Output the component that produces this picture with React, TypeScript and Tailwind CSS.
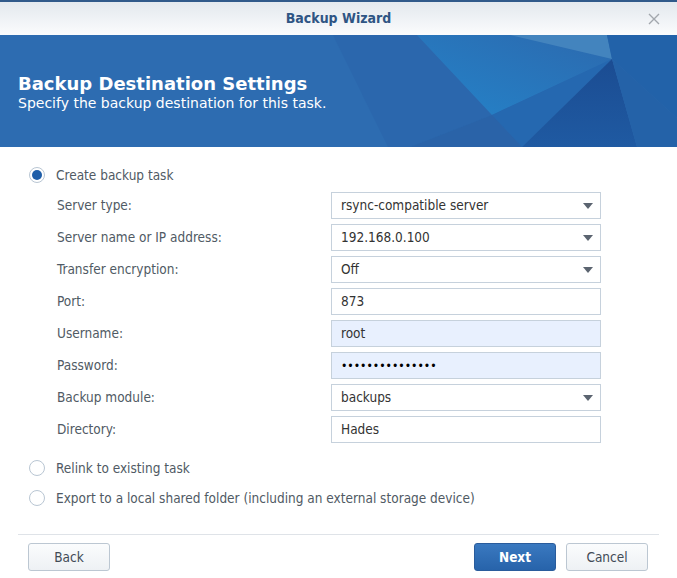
import { ReactNode } from 'react';

const FONT = '"DejaVu Sans Condensed", "DejaVu Sans", "Noto Sans", sans-serif';
const WIDE = '"DejaVu Sans", "Noto Sans", sans-serif';

const Radio = ({ checked }: { checked?: boolean }) => (
    <span className="w-[16px] h-[16px] rounded-full border border-[#b9c6d3] bg-white flex items-center justify-center shrink-0">
        {checked && <span className="w-[10px] h-[10px] rounded-full bg-[#1f5ea8]" />}
    </span>
);

const Caret = () => (
    <svg width="10" height="6" viewBox="0 0 10 6" className="shrink-0">
        <polygon points="0,0 10,0 5,6" fill="#5b6470" />
    </svg>
);

const Field = ({ label, children, select, filled }: { label: string; children: ReactNode; select?: boolean; filled?: boolean }) => (
    <div className="flex items-center h-[27px]">
        <div className="w-[274px] text-[13.5px] text-[#505a64]">{label}</div>
        <div
            className={`w-[270px] h-[27px] border border-[#c6d1dc] flex items-center pl-[9px] pr-[7px] text-[13.5px] text-[#333] ${filled ? 'bg-[#e8f0fe]' : 'bg-white'}`}
        >
            <span className="flex-1">{children}</span>
            {select && <Caret />}
        </div>
    </div>
);

const Banner = () => (
    <div className="relative h-[112px] bg-[#2d6cb1] overflow-hidden">
        {/* fondo poligonal */}
        <svg className="absolute inset-0" width="677" height="112" viewBox="0 0 677 112">
            <defs>
                <linearGradient id="mid" x1="1" y1="0" x2="0" y2="1">
                    <stop offset="0" stopColor="#2c69ae" />
                    <stop offset="1" stopColor="#2483c9" />
                </linearGradient>
                <linearGradient id="dark" x1="0" y1="0" x2="0" y2="1">
                    <stop offset="0" stopColor="#1b4c92" />
                    <stop offset="1" stopColor="#1f5aa2" />
                </linearGradient>
            </defs>
            <polygon points="333,0 417,0 492,80 410,112 388,112" fill="#2b67ad" />
            <polygon points="417,0 510,0 612,24 492,80" fill="url(#mid)" />
            <polygon points="510,0 607,0 612,24" fill="#4384be" />
            <polygon points="607,0 677,0 677,83 612,24" fill="#2262a9" />
            <polygon points="492,80 612,24 522,112" fill="#2568b0" />
            <polygon points="410,112 492,80 522,112" fill="#2a63a8" />
            <polygon points="612,24 522,112 637,112" fill="url(#dark)" />
            <polygon points="612,24 637,112 677,112 677,83" fill="#2462a8" />
        </svg>
        <div className="relative pl-[18px] pt-[37px] text-white" style={{ fontFamily: WIDE }}>
            <div className="text-[18px] font-bold leading-[23px]">Backup Destination Settings</div>
            <div className="text-[14px] leading-[17px]">Specify the backup destination for this task.</div>
        </div>
    </div>
);

export default function App() {
    return (
        <div className="w-[677px] h-[578px] bg-white overflow-hidden flex flex-col" style={{ fontFamily: FONT }}>
            <div className="h-[2px] bg-[#30598a]" />
            <div className="relative h-[33px] bg-gradient-to-b from-[#e3e8ee] to-[#fbfcfd] flex items-center justify-center">
                <span className="text-[14px] font-bold text-[#2f5584]">Backup Wizard</span>
                <svg className="absolute right-[17px] top-[11px]" width="12" height="12" viewBox="0 0 12 12">
                    <path d="M1 1L11 11M11 1L1 11" stroke="#a2a7ad" strokeWidth="1.4" />
                </svg>
            </div>
            <Banner />

            <div className="flex-1 flex flex-col pl-[29px]">
                <div className="flex items-center gap-[11px] h-[20px] mt-[18px] text-[13.5px] text-[#505a64]">
                    <Radio checked />
                    <span>Create backup task</span>
                </div>
                <div className="flex flex-col gap-[5px] pl-[28px] mt-[7px]">
                    <Field label="Server type:" select>rsync-compatible server</Field>
                    <Field label="Server name or IP address:" select>192.168.0.100</Field>
                    <Field label="Transfer encryption:" select>Off</Field>
                    <Field label="Port:">873</Field>
                    <Field label="Username:" filled>root</Field>
                    <Field label="Password:" filled>
                        <span className="text-black text-[12px]">•••••••••••••••</span>
                    </Field>
                    <Field label="Backup module:" select>backups</Field>
                    <Field label="Directory:">Hades</Field>
                </div>
                <div className="flex items-center gap-[11px] h-[20px] mt-[15px] text-[13.5px] text-[#505a64]">
                    <Radio />
                    <span>Relink to existing task</span>
                </div>
                <div className="flex items-center gap-[11px] h-[20px] mt-[10px] text-[13.5px] text-[#505a64]">
                    <Radio />
                    <span>Export to a local shared folder (including an external storage device)</span>
                </div>
            </div>

            <div className="mx-[18px] border-t border-[#dfe3e8]" />
            <div className="flex items-center pt-[8px] pb-[7px] pl-[28px] pr-[29px]">
                <button className="w-[82px] h-[28px] rounded-[3px] border border-[#bcc7d2] bg-gradient-to-b from-[#fbfcfd] to-[#eef1f4] text-[13.5px] text-[#414b56]">
                    Back
                </button>
                <div className="flex-1" />
                <button className="w-[82px] h-[28px] rounded-[3px] border border-[#2a5c9c] bg-gradient-to-b from-[#3a79c0] to-[#2763aa] text-[13.5px] font-bold text-white">
                    Next
                </button>
                <button className="ml-[10px] w-[82px] h-[28px] rounded-[3px] border border-[#bcc7d2] bg-gradient-to-b from-[#fbfcfd] to-[#eef1f4] text-[13.5px] text-[#414b56]">
                    Cancel
                </button>
            </div>
        </div>
    );
}
